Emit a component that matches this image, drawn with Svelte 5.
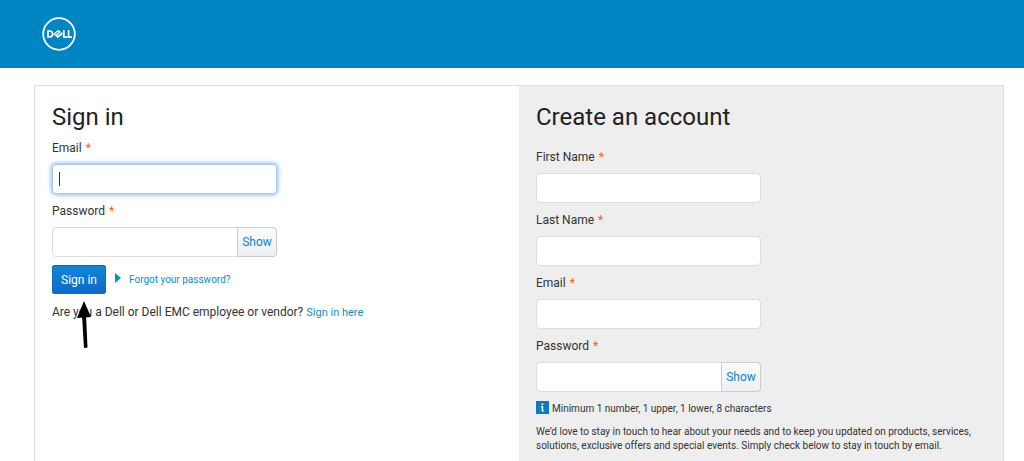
<script>
    let showPassword = false;
    let showNewPassword = false;

    let email = '';
    let password = '';
    let newPassword = '';

    const accountFields = [
        { id: 'first-name', label: 'First Name', type: 'text' },
        { id: 'last-name', label: 'Last Name', type: 'text' },
        { id: 'new-email', label: 'Email', type: 'email' }
    ];
</script>

<div class="page">
    <header>
        <a href="/" class="logo" aria-label="Dell">
            <svg width="34" height="34" viewBox="0 0 34 34" fill="none" stroke="#fff">
                <circle cx="17" cy="17" r="15.8" stroke-width="1.8" />
                <path d="M6 14V20H7.6C9.6 20 10.6 18.8 10.6 17S9.6 14 7.6 14Z" stroke-width="1.7" />
                <path d="M12 17L16.3 13.6L18 15L14.2 18L15.8 19.3L20.4 15.8M12 17L15.8 20.2L20.4 16.8" stroke-width="1.2" />
                <path d="M21.8 13V20.2H25.4M26.6 13V20.2H30" stroke-width="1.7" />
            </svg>
        </a>
    </header>

    <main>
        <section class="sign-in">
            <h1>Sign in</h1>
            <form on:submit|preventDefault>
                <div class="field">
                    <label for="email">Email <span class="required">*</span></label>
                    <div class="control active">
                        <input id="email" type="email" bind:value={email} />
                        <span class="caret"></span>
                    </div>
                </div>
                <div class="field">
                    <label for="password">Password <span class="required">*</span></label>
                    <div class="control">
                        <input id="password" type={showPassword ? 'text' : 'password'} value={password} />
                        <button type="button" class="show" on:click={() => (showPassword = !showPassword)}>Show</button>
                    </div>
                </div>
                <div class="actions">
                    <button type="submit" class="submit">Sign in</button>
                    <svg class="marker" width="6" height="10" viewBox="0 0 6 10">
                        <path d="M0 0L6 5L0 10Z" fill="#0e8fc0" />
                    </svg>
                    <a href="/forgot">Forgot your password?</a>
                    <!-- Arrow pointing at the sign in button -->
                    <svg class="pointer" width="16" height="48" viewBox="0 0 16 48">
                        <path d="M7 0L0 17L14 16Z" />
                        <path d="M5 14L9 14L10.5 46.5L7 47Z" />
                    </svg>
                </div>
            </form>
            <p class="employee">Are you a Dell or Dell EMC employee or vendor? <a href="/employee">Sign in here</a></p>
        </section>

        <section class="create">
            <h1>Create an account</h1>
            <form on:submit|preventDefault>
                {#each accountFields as field}
                    <div class="field">
                        <label for={field.id}>{field.label} <span class="required">*</span></label>
                        <div class="control">
                            <input id={field.id} type={field.type} />
                        </div>
                    </div>
                {/each}
                <div class="field">
                    <label for="new-password">Password <span class="required">*</span></label>
                    <div class="control">
                        <input id="new-password" type={showNewPassword ? 'text' : 'password'} value={newPassword} />
                        <button type="button" class="show" on:click={() => (showNewPassword = !showNewPassword)}>Show</button>
                    </div>
                </div>
                <p class="hint">
                    <svg width="13" height="13" viewBox="0 0 13 13">
                        <rect width="13" height="13" fill="#0a7dba" />
                        <path d="M5.5 2.5H7.3V4H5.5ZM4.8 5H7.2V9.5H8.2V10.5H5.6V6H4.8Z" fill="#fff" />
                    </svg>
                    Minimum 1 number, 1 upper, 1 lower, 8 characters
                </p>
                <p class="offers">
                    We’d love to stay in touch to hear about your needs and to keep you updated on products, services,
                    solutions, exclusive offers and special events. Simply check below to stay in touch by email.
                </p>
            </form>
        </section>
    </main>
</div>

<style>
    .page {
        display: flex;
        flex-direction: column;
        min-height: 100vh;
        background: #fff;
        color: #333;
        font-family: Roboto, Arial, sans-serif;
        font-size: 12px;
        line-height: 16px;
    }

    /* Top bar */
    header {
        padding: 17px 42px;
        background: #0085c3;
    }

    .logo {
        display: block;
        width: 34px;
        height: 34px;
    }

    .logo svg {
        display: block;
    }

    /* Two column panel */
    main {
        display: flex;
        flex: 1;
        margin: 17px 20px 0 34px;
        border: 1px solid #ddd;
        border-bottom: none;
    }

    section {
        flex: 1;
        padding: 16px 17px 0;
    }

    .create {
        background: #eee;
    }

    h1 {
        margin: 0 0 8px;
        color: #222;
        font-size: 24px;
        font-weight: 400;
        line-height: 30px;
    }

    .create h1 {
        margin-bottom: 17px;
    }

    /* Form fields */
    .field {
        margin-bottom: 9px;
    }

    label {
        display: block;
        margin-bottom: 8px;
    }

    .required {
        margin-left: 1px;
        color: #ee6411;
    }

    .control {
        position: relative;
        display: flex;
        box-sizing: border-box;
        width: 225px;
        height: 30px;
        border: 1px solid #ddd;
        border-radius: 4px;
        background: #fff;
    }

    .control.active {
        border-color: #a9c9ec;
        box-shadow: 0 0 4px 1px #8bb9e8;
    }

    input {
        flex: 1;
        min-width: 0;
        padding: 0 6px;
        border: none;
        border-radius: 4px;
        outline: none;
        background: transparent;
        font: inherit;
    }

    .caret {
        position: absolute;
        top: 7px;
        left: 6px;
        width: 1px;
        height: 14px;
        background: #333;
    }

    button {
        padding: 0;
        font: inherit;
        cursor: pointer;
    }

    .show {
        width: 40px;
        margin: -1px;
        border: 1px solid #ccc;
        border-radius: 0 4px 4px 0;
        background: linear-gradient(#fafafa, #edf0f2);
        color: #0e85c6;
    }

    a {
        color: #0e8fc6;
        font-size: 10px;
        text-decoration: none;
    }

    .actions {
        position: relative;
        display: flex;
        align-items: center;
        margin-top: -1px;
    }

    .submit {
        width: 54px;
        height: 29px;
        border: 1px solid #0c6cc0;
        border-radius: 2px;
        background: linear-gradient(#1287d5, #0f68c8);
        color: #fff;
    }

    .marker {
        margin: 0 8px 4px 9px;
    }

    .pointer {
        position: absolute;
        top: 36px;
        left: 25px;
    }

    .employee {
        margin: 10px 0 0;
    }

    .employee a {
        font-size: 11px;
    }

    .hint {
        display: flex;
        align-items: flex-start;
        gap: 3px;
        margin: 0 0 8px;
        font-size: 10px;
    }

    .offers {
        margin: 0;
        font-size: 10px;
        line-height: 14px;
    }
</style>
